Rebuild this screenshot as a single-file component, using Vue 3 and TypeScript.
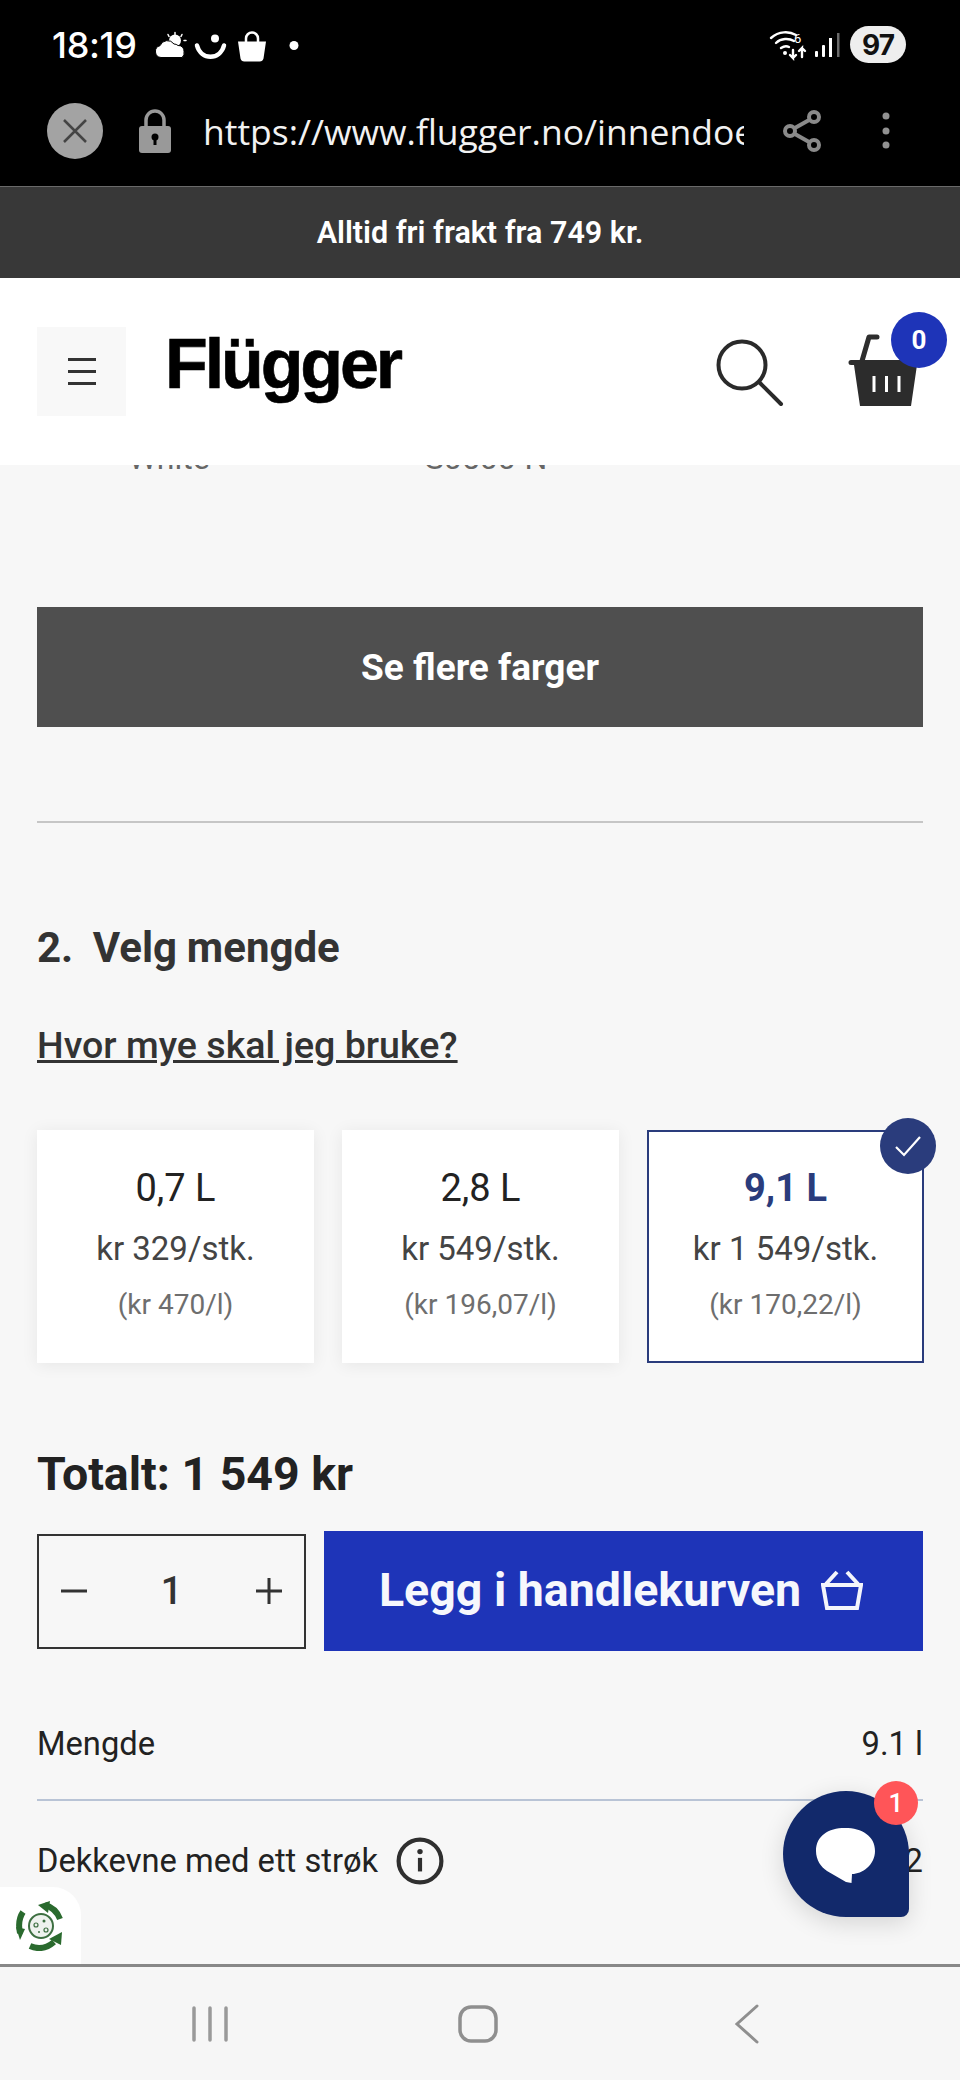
<script setup lang="ts">
const sizes = [
  { litre: '0,7 L', price: 'kr 329/stk.', unit: '(kr 470/l)', selected: false },
  { litre: '2,8 L', price: 'kr 549/stk.', unit: '(kr 196,07/l)', selected: false },
  { litre: '9,1 L', price: 'kr 1 549/stk.', unit: '(kr 170,22/l)', selected: true },
]
</script>

<template>
  <div class="phone">
    <div class="chrome">
      <div class="status">
        <span class="time">18:19</span>
        <svg class="st-icons" width="160" height="40" viewBox="0 -5.500 160 40">
          <!-- cloud + sun -->
          <g fill="#fff" transform="translate(0 -3)">
            <circle cx="22" cy="13" r="6" />
            <path d="M8 30a6 6 0 0 1-1-11.800a8 8 0 0 1 14-1.700a6 6 0 0 1 4 1.500a5.500 5.500 0 0 1 6 6a6 6 0 0 1-2 6z" stroke="#000" stroke-width="1" />
          </g>
          <g stroke="#fff" stroke-width="1.500" stroke-linecap="round" transform="translate(1 -1)">
            <path d="M21 3v2M14 5l1 2M28 5l-1 2M32 11h-2" />
          </g>
          <!-- smile -->
          <circle cx="62" cy="8" r="4" fill="#fff" />
          <path d="M44 15c4 15 23 15 27 0" fill="none" stroke="#fff" stroke-width="4.500" stroke-linecap="round" />
          <!-- bag -->
          <path d="M85 11h28l-2.500 17a4 4 0 0 1-4 3H91.500a4 4 0 0 1-4-3z" fill="#fff" />
          <path d="M93 12V8a6 6 0 0 1 12 0v4" fill="none" stroke="#fff" stroke-width="2.500" />
          <circle cx="141" cy="15" r="4.500" fill="#fff" />
        </svg>
        <span class="st-spacer"></span>
        <svg width="80" height="32" viewBox="0 0 80 32">
          <g transform="translate(10 0)">
            <g fill="none" stroke="#fff" stroke-width="2.400" stroke-linecap="round">
              <path d="M1 9c8-7 18-7 25-3M6 14c5-5 13-5 18-2M11 19c3-2 6-2 8-1" />
              <path d="M23 21v8l-3-3M23 29l3-3M32 28v-9l-3 3M32 19l3 3" />
            </g>
            <circle cx="15" cy="24" r="2" fill="#fff" />
            <text x="24" y="14" fill="#fff" font-size="13" font-family="Roboto, sans-serif">6</text>
          </g>
          <rect x="55" y="22" width="3" height="6" rx="1" fill="#fff" />
          <rect x="62" y="16" width="3" height="12" rx="1" fill="#fff" />
          <rect x="69" y="9" width="3" height="19" fill="#fff" />
          <rect x="77" y="4" width="2.500" height="24" fill="#6a6a6a" />
        </svg>
        <span class="battery">97</span>
      </div>
      <div class="urlbar">
        <svg width="56" height="56" viewBox="0 0 56 56">
          <circle cx="28" cy="28" r="28" fill="#a3a3a3" />
          <path d="M17 17l22 22M39 17L17 39" stroke="#444" stroke-width="2.500" />
        </svg>
        <svg class="lock" width="32" height="44" viewBox="0 0 32 44">
          <path d="M7 18v-7a9 9 0 0 1 18 0v7" fill="none" stroke="#999" stroke-width="3.500" />
          <rect y="17" width="32" height="27" rx="3" fill="#999" />
          <circle cx="16" cy="28" r="3.500" fill="#000" />
          <rect x="14.500" y="29" width="3" height="7" fill="#000" />
        </svg>
        <div class="url">https://www.flugger.no/innendoers</div>
        <svg class="share" width="40" height="44" viewBox="0 0 40 44">
          <g fill="none" stroke="#8a8a8a" stroke-width="4">
            <circle cx="32" cy="8" r="5" />
            <circle cx="8" cy="22" r="5" />
            <circle cx="32" cy="36" r="5" />
            <path d="M12 19.500l16-9M12 24.500l16 9" />
          </g>
        </svg>
        <svg class="dots" width="8" height="40" viewBox="0 0 8 40">
          <circle cx="4" cy="5" r="3.500" fill="#919191" />
          <circle cx="4" cy="20" r="3.500" fill="#919191" />
          <circle cx="4" cy="34" r="3.500" fill="#919191" />
        </svg>
      </div>
    </div>

    <div class="notice">Alltid fri frakt fra 749 kr.</div>

    <header class="site-header">
      <button class="burger"><span></span><span></span><span></span></button>
      <div class="logo">Flügger</div>
      <svg class="search" width="70" height="70" viewBox="0 0 70 70">
        <circle cx="26" cy="26" r="23.500" fill="none" stroke="#2a2a2a" stroke-width="4" />
        <path d="M44 44l21 21" stroke="#2a2a2a" stroke-width="4" stroke-linecap="round" />
      </svg>
      <div class="cart">
        <svg width="74" height="74" viewBox="0 0 74 74">
          <path d="M14 28l7-24h8" fill="none" stroke="#2e2e2e" stroke-width="5" stroke-linecap="round" stroke-linejoin="round" />
          <path d="M3 27h68a2 2 0 0 1 0 5h-2l-6 41H12L6 32H3a2.500 2.500 0 0 1 0-5z" fill="#2c2c2c" />
          <path d="M26 43v16M38.500 43v16M51 43v16" stroke="#fff" stroke-width="3" />
        </svg>
        <span class="cart-count">0</span>
      </div>
    </header>

    <main class="content">
      <div class="swatch-names">
        <span>White</span>
        <span>S0500-N</span>
      </div>

      <button class="more">Se flere farger</button>
      <hr class="divider" />

      <h2 class="step">2.&nbsp; Velg mengde</h2>
      <a class="howmuch">Hvor mye skal jeg bruke?</a>

      <div class="sizes">
        <div v-for="s in sizes" :key="s.litre" class="size" :class="{ selected: s.selected }">
          <div class="litre">{{ s.litre }}</div>
          <div class="price">{{ s.price }}</div>
          <div class="unit">{{ s.unit }}</div>
          <span v-if="s.selected" class="tick">
            <svg width="28" height="24" viewBox="0 0 28 24">
              <path d="M2 13l8 8L26 3" fill="none" stroke="#fff" stroke-width="2.200" />
            </svg>
          </span>
        </div>
      </div>

      <div class="total">Totalt: 1 549 kr</div>

      <div class="buy">
        <div class="qty">
          <svg width="26" height="26" viewBox="0 0 26 26"><path d="M0 13h26" stroke="#333" stroke-width="3" /></svg>
          <span>1</span>
          <svg width="26" height="26" viewBox="0 0 26 26"><path d="M0 13h26M13 0v26" stroke="#333" stroke-width="3" /></svg>
        </div>
        <button class="add">
          Legg i handlekurven
          <svg width="42" height="40" viewBox="0 0 42 40">
            <path d="M2 15h38l-4 23H6zM5 14L16 2M37 14L26 2" fill="none" stroke="#f4f5fb" stroke-width="4" />
          </svg>
        </button>
      </div>

      <div class="spec first"><span>Mengde</span><span>9.1 l</span></div>
      <div class="spec second">
        <span class="with-info">
          Dekkevne med ett strøk
          <svg width="48" height="48" viewBox="0 0 46 46">
            <circle cx="23" cy="23" r="20.500" fill="none" stroke="#2f2f2f" stroke-width="4" />
            <circle cx="23" cy="14" r="2.600" fill="#2f2f2f" />
            <rect x="21" y="20" width="4" height="13" fill="#2f2f2f" />
          </svg>
        </span>
        <span>12</span>
      </div>
    </main>

    <nav class="softkeys">
      <svg width="40" height="36" viewBox="0 0 40 36">
        <path d="M4 2v32M20 2v32M36 2v32" stroke="#999" stroke-width="3.500" stroke-linecap="round" />
      </svg>
      <svg class="home" width="40" height="38" viewBox="0 0 40 38">
        <rect x="2" y="2" width="36" height="34" rx="11" fill="none" stroke="#8f8f8f" stroke-width="3.500" />
      </svg>
      <svg class="back" width="26" height="40" viewBox="0 0 26 40">
        <path d="M23 2L3 20l20 18" fill="none" stroke="#8f8f8f" stroke-width="3" stroke-linecap="round" />
      </svg>
    </nav>

    <!-- floating stuff -->
    <div class="eco">
      <svg width="50" height="50" viewBox="0 0 50 50">
        <g fill="none" stroke="#2a6a2e" stroke-width="6">
          <path d="M29 4c7 2 12 6 15 14" />
          <path d="M7 11C3 17 2 23 4 32" />
          <path d="M14 45c9 4 17 2 24-4" />
        </g>
        <g fill="#2a6a2e">
          <path d="M22 4l12-4-2 12z" />
          <path d="M0 26l9 2-5 11z" />
          <path d="M33 38l13-7-1 13z" />
        </g>
        <circle cx="25" cy="25" r="12" fill="#eef2ee" stroke="#3d6f41" stroke-width="2" />
        <circle cx="20" cy="24" r="2" fill="none" stroke="#3d6f41" stroke-width="1.200" />
        <circle cx="28" cy="20" r="1.500" fill="#3d6f41" />
        <circle cx="30" cy="29" r="2" fill="none" stroke="#3d6f41" stroke-width="1.200" />
        <circle cx="23" cy="31" r="1" fill="#3d6f41" />
      </svg>
    </div>
    <div class="chat">
      <svg width="60" height="58" viewBox="0 0 60 58">
        <path d="M29 1C46 1 59 9 59 24C59 38 46 47 36 47L35.500 56L30 55L11 44C5 40 0 33 0 24C0 9 12 1 29 1Z" fill="#fff" />
      </svg>
      <span class="chat-badge">1</span>
    </div>
  </div>
</template>

<style scoped>
.phone {
  position: relative;
  width: 960px;
  height: 2080px;
  overflow: hidden;
  display: flex;
  flex-direction: column;
  background: #f7f7f7;
  font-family: Roboto, "Liberation Sans", sans-serif;
  color: #222;
}
.chrome {
  height: 186px;
  background: #000;
  color: #fff;
  border-bottom: 1px solid #6a6a6a;
  flex: none;
}
.status {
  height: 85px;
  box-sizing: border-box;
  padding: 4px 54px 0 52px;
  display: flex;
  align-items: center;
}
.time {
  font-family: Inter, sans-serif;
  font-weight: 500;
  font-size: 36px;
  letter-spacing: -0.3px;
  width: 101px;
}
.st-spacer { flex: 1; }
.battery {
  margin-left: 10px;
  width: 56px;
  height: 37px;
  border-radius: 19px;
  background: #eee;
  color: #111;
  font-family: Inter, sans-serif;
  font-weight: 700;
  font-size: 28px;
  letter-spacing: -1px;
  display: flex;
  align-items: center;
  justify-content: center;
}
.urlbar {
  height: 92px;
  padding: 0 0 0 47px;
  display: flex;
  align-items: center;
}
.lock { margin-left: 36px; }
.url {
  margin-left: 32px;
  width: 541px;
  overflow: hidden;
  white-space: nowrap;
  font-family: "Open Sans", sans-serif;
  font-size: 35.500px;
  color: #f2f2f2;
}
.share { margin-left: 38px; flex: none; }
.dots { margin-left: 60px; flex: none; }
.notice {
  flex: none;
  height: 91px;
  background: #383838;
  color: #fff;
  font-weight: 600;
  font-size: 30.500px;
  display: flex;
  align-items: center;
  justify-content: center;
}
.site-header {
  position: relative;
  z-index: 2;
  flex: none;
  height: 187px;
  background: #fff;
  display: flex;
  align-items: center;
  padding-left: 37px;
}
.burger {
  width: 89px;
  height: 89px;
  border: none;
  background: #f8f8f8;
  padding: 0;
  display: flex;
  flex-direction: column;
  align-items: center;
  justify-content: center;
  gap: 9px;
}
.burger span {
  width: 28px;
  height: 3px;
  background: #333;
}
.logo {
  margin-left: 39px;
  margin-top: -16px;
  width: 314px;
  font-family: "Liberation Sans", Arial, sans-serif;
  font-weight: 700;
  font-size: 70px;
  letter-spacing: -3.100px;
  -webkit-text-stroke: 0.6px #000;
  color: #000;
  line-height: 1;
}
.search {
  margin-left: 237px;
  margin-top: 4px;
  flex: none;
}
.cart {
  position: relative;
  margin-left: 62px;
  margin-top: -4px;
}
.cart svg { display: block; }
.cart-count {
  position: absolute;
  top: -21px;
  left: 43px;
  width: 56px;
  height: 56px;
  border-radius: 50%;
  background: #1e34b8;
  color: #fff;
  font-weight: 700;
  font-size: 26px;
  display: flex;
  align-items: center;
  justify-content: center;
}
.content {
  flex: 1;
  min-height: 0;
  overflow: hidden;
  padding: 0 37px;
}
.swatch-names {
  margin-top: -24px;
  display: grid;
  grid-template-columns: 264px 264px;
  gap: 53px;
  height: 34px;
  line-height: 34px;
  text-align: center;
  font-size: 32px;
  color: #666;
}
.more {
  display: block;
  width: 886px;
  height: 120px;
  margin-top: 132px;
  border: none;
  background: #4f4f4f;
  color: #fff;
  font-family: inherit;
  font-weight: 700;
  font-size: 37px;
}
.divider {
  margin: 94px 0 0;
  border: none;
  border-top: 2px solid #c6c6c6;
}
.step {
  margin: 101px 0 0;
  font-size: 42px;
  line-height: 48px;
  font-weight: 700;
  word-spacing: -0.7px;
  color: #333;
}
.howmuch {
  display: block;
  margin-top: 49px;
  font-size: 37.600px;
  line-height: 48px;
  font-weight: 500;
  color: #333;
  text-decoration: underline;
}
.sizes {
  margin-top: 61px;
  display: grid;
  grid-template-columns: repeat(3, 277px);
  gap: 28px;
}
.size {
  position: relative;
  height: 233px;
  background: #fff;
  box-shadow: 0 2px 16px rgba(0, 0, 0, 0.07);
  text-align: center;
  padding-top: 34px;
  box-sizing: border-box;
}
.size.selected {
  border: 2px solid #2a3c7c;
  padding-top: 32px;
  box-shadow: none;
}
.litre {
  font-size: 38px;
  line-height: 48px;
  color: #222;
}
.selected .litre {
  font-weight: 700;
  color: #2a3c7c;
}
.price {
  margin-top: 13px;
  font-size: 33px;
  line-height: 48px;
  color: #444;
}
.unit {
  margin-top: 8px;
  font-size: 28px;
  line-height: 48px;
  color: #6e6e6e;
}
.tick {
  position: absolute;
  top: -14px;
  right: -14px;
  width: 56px;
  height: 56px;
  border-radius: 50%;
  background: #2a3c7c;
  display: flex;
  align-items: center;
  justify-content: center;
}
.total {
  margin-top: 84px;
  font-size: 46.500px;
  line-height: 54px;
  font-weight: 700;
  color: #222;
}
.buy {
  margin-top: 30px;
  display: flex;
  align-items: center;
  gap: 18px;
}
.qty {
  width: 269px;
  height: 115px;
  box-sizing: border-box;
  border: 2px solid #333;
  display: flex;
  align-items: center;
  justify-content: space-between;
  padding: 0 22px;
  font-size: 38px;
  font-weight: 500;
  color: #333;
}
.add {
  width: 599px;
  height: 120px;
  border: none;
  padding: 0 5px 2px 0;
  background: #1e34b8;
  color: #f6f7fc;
  font-family: inherit;
  font-weight: 700;
  font-size: 46.500px;
  display: flex;
  align-items: center;
  justify-content: center;
  gap: 20px;
}
.spec {
  height: 114px;
  display: flex;
  align-items: center;
  justify-content: space-between;
  font-size: 32.700px;
  color: #222;
}
.spec.first {
  margin-top: 35px;
  padding-top: 2px;
  box-sizing: border-box;
  border-bottom: 2px solid #b9c4d6;
  height: 115px;
}
.spec.second {
  padding-top: 6px;
  box-sizing: border-box;
}
.with-info {
  display: flex;
  align-items: center;
  gap: 18px;
}
.softkeys {
  flex: none;
  height: 113px;
  border-top: 3px solid #888;
  background: #f6f6f6;
  position: relative;
  z-index: 3;
  display: flex;
  align-items: center;
  padding-left: 190px;
}
.home { margin-left: 228px; }
.back { margin-left: 236px; }
.eco {
  position: absolute;
  left: 0;
  top: 1887px;
  width: 81px;
  height: 78px;
  background: #fff;
  border-top-right-radius: 28px;
  display: flex;
  align-items: center;
  justify-content: center;
}
.chat {
  position: absolute;
  left: 783px;
  top: 1791px;
  width: 126px;
  height: 126px;
  background: #12296b;
  border-radius: 50% 50% 8px 50%;
  box-shadow: 0 6px 24px rgba(0, 0, 0, 0.14);
  display: flex;
  align-items: center;
  justify-content: center;
}
.chat svg {
  margin-top: 3px;
}
.chat-badge {
  position: absolute;
  top: -10px;
  right: -9px;
  width: 44px;
  height: 44px;
  border-radius: 50%;
  background: #ff5558;
  color: #fff;
  font-size: 26px;
  font-weight: 500;
  display: flex;
  align-items: center;
  justify-content: center;
}
</style>
